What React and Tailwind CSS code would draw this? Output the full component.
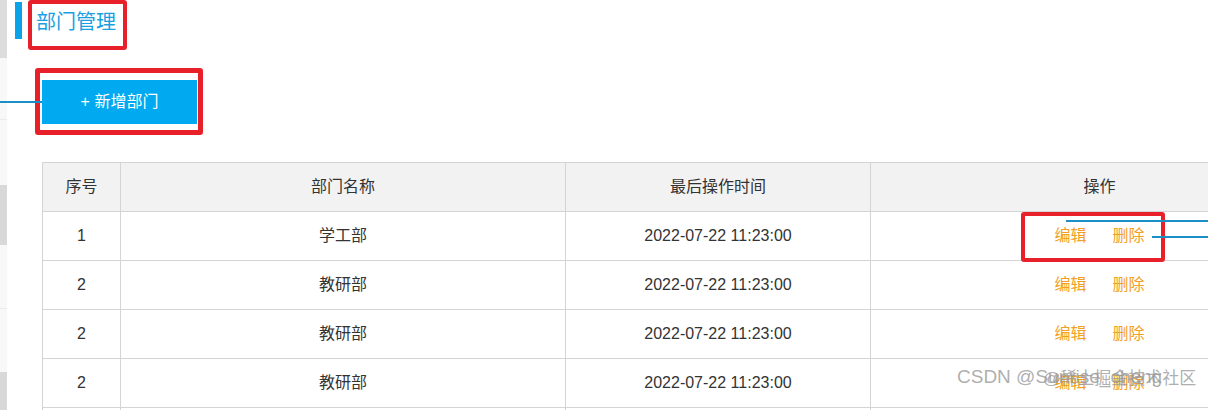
// Department management page (screenshot with red/blue annotations).
const FONT = { fontFamily: '"Liberation Sans", "Noto Sans CJK SC", sans-serif' };

const ROWS = [
  { no: 1, name: "学工部", time: "2022-07-22 11:23:00" },
  { no: 2, name: "教研部", time: "2022-07-22 11:23:00" },
  { no: 2, name: "教研部", time: "2022-07-22 11:23:00" },
  { no: 2, name: "教研部", time: "2022-07-22 11:23:00" },
];

function SideStrip() {
  return (
    <div className="flex w-[7px] shrink-0 flex-col">
      <div className="h-[58px] shrink-0 bg-[#dcdcdc]" />
      <div className="h-[62px] shrink-0 border-b border-[#ececec] bg-[#f8f8f8]" />
      <div className="h-[65px] shrink-0 bg-[#f8f8f8]" />
      <div className="h-[60px] shrink-0 bg-[#d8d8d8]" />
      <div className="h-[64px] shrink-0 border-b border-[#ececec] bg-[#f8f8f8]" />
      <div className="h-[63px] shrink-0 bg-[#f8f8f8]" />
      <div className="flex-1 bg-[#d8d8d8]" />
    </div>
  );
}

function App() {
  return (
    <div
      className="relative flex h-[410px] w-[1208px] overflow-hidden bg-white text-[#333]"
      style={FONT}
    >
      <SideStrip />

      <main className="flex min-w-0 flex-1 flex-col">
        <div className="ml-[8px] mt-[2px] flex h-[37px] shrink-0 items-center gap-[14px]">
          <span className="h-[37px] w-[7px] bg-[#0aa2e8]" />
          <h1 className="pt-[2px] text-[20px] leading-none text-[#1b9fe2]">部门管理</h1>
        </div>

        <button
          type="button"
          className="ml-[35px] mt-[41px] h-[44px] w-[155px] shrink-0 bg-[#01a9f0] text-[16px] text-white"
        >
          + 新增部门
        </button>

        <table className="ml-[35px] mt-[38px] w-[1286px] shrink-0 table-fixed border-collapse text-center text-[16px]">
          <colgroup>
            <col className="w-[78px]" />
            <col className="w-[445px]" />
            <col className="w-[305px]" />
            <col className="w-[458px]" />
          </colgroup>
          <thead>
            <tr className="h-[49px] bg-[#f2f2f2]">
              {["序号", "部门名称", "最后操作时间", "操作"].map((h) => (
                <th key={h} className="border border-[#d4d4d4] p-0 font-normal">
                  {h}
                </th>
              ))}
            </tr>
          </thead>
          <tbody>
            {ROWS.map((r, i) => (
              <tr key={i} className="h-[49px]">
                <td className="border border-[#d4d4d4] p-0">{r.no}</td>
                <td className="border border-[#d4d4d4] p-0">{r.name}</td>
                <td className="border border-[#d4d4d4] p-0">{r.time}</td>
                <td className="border border-[#d4d4d4] p-0">
                  <span className="inline-flex gap-[26px] text-[#f2a024]">
                    <a>编辑</a>
                    <a>删除</a>
                  </span>
                </td>
              </tr>
            ))}
            {/* next row, scrolled below the visible area */}
            <tr className="h-[49px]">
              <td className="border border-[#d4d4d4] p-0" />
              <td className="border border-[#d4d4d4] p-0" />
              <td className="border border-[#d4d4d4] p-0" />
              <td className="border border-[#d4d4d4] p-0" />
            </tr>
          </tbody>
        </table>
      </main>

      {/* annotation overlays */}
      <div className="absolute left-[28px] top-0 h-[50px] w-[99px] rounded-[3px] border-[4px] border-[#e8202a]" />
      <div className="absolute left-[35px] top-[68px] h-[67px] w-[168px] rounded-[3px] border-[5px] border-[#e8202a]" />
      <div className="absolute left-0 top-[101px] h-[2px] w-[42px] bg-[#1b8fc6]" />
      <div className="absolute left-[1021px] top-[212px] h-[50px] w-[144px] rounded-[3px] border-[4px] border-[#e8202a]" />
      <div className="absolute left-[1066px] top-[220px] h-[2px] w-[142px] bg-[#1b8fc6]" />
      <div className="absolute left-[1152px] top-[236px] h-[2px] w-[56px] bg-[#1b8fc6]" />

      {/* watermark */}
      <div className="pointer-events-none absolute left-[957px] top-[367px] text-[19px] leading-none text-[#999]/80">
        CSDN @Sunrise_cheng
      </div>
      <div className="pointer-events-none absolute left-[1043px] top-[370px] text-[17px] leading-none text-[#999]/80">
        @稀土掘金技术社区
      </div>
    </div>
  );
}

export default App;
